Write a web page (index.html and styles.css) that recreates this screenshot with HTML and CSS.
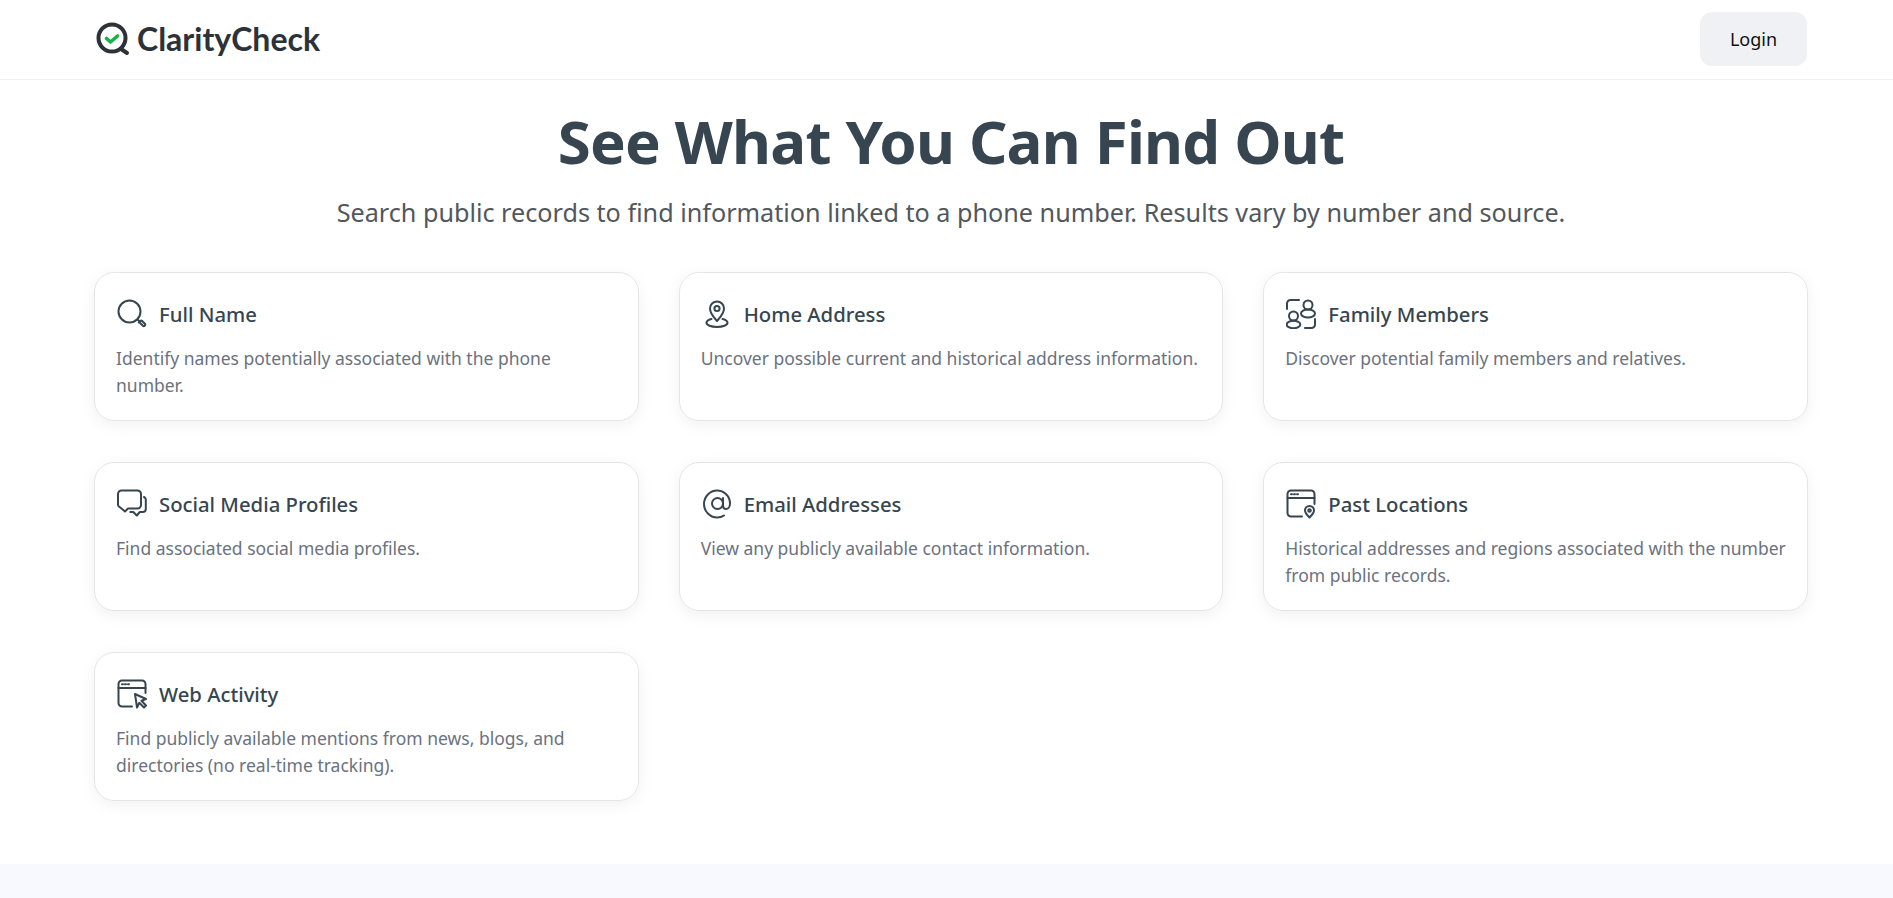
FILE: index.html
```html
<!DOCTYPE html>
<html lang="en">

<head>
  <meta charset="UTF-8">
  <meta name="viewport" content="width=device-width, initial-scale=1.0">
  <title>ClarityCheck</title>
  <link rel="stylesheet" href="styles.css">
</head>

<body>
  <header class="topbar">
    <a href="#" class="logo">
      <svg class="logo-icon" viewBox="0 0 34 34" fill="none" stroke-linecap="round" stroke-linejoin="round">
        <circle cx="16" cy="16" r="13.500" stroke="#2b3238" stroke-width="4" />
        <path d="M25 27l6 4" stroke="#2b3238" stroke-width="4" />
        <path d="M10.500 16.500l4 3.500 7-6" stroke="#12b546" stroke-width="3.600" />
      </svg>
      <span>ClarityCheck</span>
    </a>
    <button class="login">Login</button>
  </header>

  <main>
    <h1>See What You Can Find Out</h1>
    <p class="lead">Search public records to find information linked to a phone number. Results vary by number and source.</p>

    <section class="cards">
      <article class="card">
        <h2>
          <svg viewBox="0 0 30 30" class="icon">
            <circle cx="12.500" cy="12.500" r="11" />
            <path d="M20.500 20.500l1.500 1.500" />
            <path d="M21.800 23.500l1.700-1.700a1 1 0 0 1 1.400 0l3 3a1.200 1.200 0 0 1 0 1.700l-.3.300a1.200 1.200 0 0 1-1.700 0l-3-3a1 1 0 0 1-.1-1.300z" />
          </svg>
          Full Name
        </h2>
        <p>Identify names potentially associated with the phone number.</p>
      </article>

      <article class="card">
        <h2>
          <svg viewBox="0 0 30 30" class="icon">
            <path d="M15 22c-3.500-4-7-7.500-7-12.500a7 7 0 0 1 14 0c0 5-3.500 8.500-7 12.500z" />
            <circle cx="15" cy="9.500" r="2.600" />
            <path d="M9.500 20c-3 .8-5 2-5 3.800 0 2.300 4.500 4.200 10.500 4.200s10.500-1.900 10.500-4.200c0-1.800-2-3-5-3.800" />
          </svg>
          Home Address
        </h2>
        <p>Uncover possible current and historical address information.</p>
      </article>

      <article class="card">
        <h2>
          <svg viewBox="0 0 30 30" class="icon">
            <path d="M1 10V4.500A3.500 3.500 0 0 1 4.500 1H13" />
            <path d="M29 20v5.500a3.500 3.500 0 0 1-3.500 3.500H19" />
            <circle cx="22" cy="6" r="4.500" />
            <ellipse cx="22" cy="14.500" rx="7" ry="4" />
            <circle cx="7.500" cy="17" r="4.500" />
            <ellipse cx="7.500" cy="25.500" rx="6.800" ry="3.800" />
          </svg>
          Family Members
        </h2>
        <p>Discover potential family members and relatives.</p>
      </article>

      <article class="card">
        <h2>
          <svg viewBox="0 0 30 30" class="icon">
            <path d="M4.500 1.500h16a3.500 3.500 0 0 1 3.500 3.500v11a3.500 3.500 0 0 1-3.500 3.500H11l-3 3-5-4.200A3.500 3.500 0 0 1 1 16V5a3.500 3.500 0 0 1 3.500-3.500z" />
            <path d="M27 8c1 .5 1.800 1.500 1.800 2.500V20c0 1.800-1 3-3 3h-3l-3 3.500-3.500-3.500h-3" />
          </svg>
          Social Media Profiles
        </h2>
        <p>Find associated social media profiles.</p>
      </article>

      <article class="card">
        <h2>
          <svg viewBox="0 0 30 30" class="icon">
            <circle cx="15.500" cy="14.500" r="5.500" />
            <path d="M21 9v7.500c0 2 1.200 3.500 3 3.500s4-1.800 4-5.500C28 7 22 1.500 15 1.500S2 7.500 2 15s6 13.500 13 13.500c2.500 0 5-.6 7-2" />
          </svg>
          Email Addresses
        </h2>
        <p>View any publicly available contact information.</p>
      </article>

      <article class="card">
        <h2>
          <svg viewBox="0 0 30 30" class="icon">
            <path d="M16 27.500H5a3.500 3.500 0 0 1-3.500-3.500V5A3.500 3.500 0 0 1 5 1.500h20A3.500 3.500 0 0 1 28.500 5v10" />
            <path d="M1.500 9h27" />
            <path d="M5 5.200h1M8 5.200h1M11 5.200h1" />
            <path d="M23.500 28.500c-2.500-2.500-4.500-4.500-4.500-7a4.500 4.500 0 0 1 9 0c0 2.500-2 4.500-4.500 7z" />
            <circle cx="23.500" cy="21.500" r="1.300" />
          </svg>
          Past Locations
        </h2>
        <p>Historical addresses and regions associated with the number from public records.</p>
      </article>

      <article class="card">
        <h2>
          <svg viewBox="0 0 30 30" class="icon">
            <path d="M15 27.500H5a3.500 3.500 0 0 1-3.500-3.500V5A3.500 3.500 0 0 1 5 1.500h20A3.500 3.500 0 0 1 28.500 5v9" />
            <path d="M1.500 9h27" />
            <path d="M5 5.200h1M8 5.200h1M11 5.200h1" />
            <path d="M18 15l11 5-4.500 1.800L29 26.500l-2 2-4.700-4.700L20 28.500z" />
          </svg>
          Web Activity
        </h2>
        <p>Find publicly available mentions from news, blogs, and directories (no real-time tracking).</p>
      </article>
    </section>
  </main>

  <footer class="band"></footer>
</body>

</html>
```

FILE: styles.css
```css
* {
  box-sizing: border-box;
}

body {
  display: flex;
  flex-direction: column;
  min-block-size: 100vh;
  margin: 0;
  font-family: "Noto Sans", sans-serif;
  background: #fff;
  color: #36454f;
}

.topbar {
  display: flex;
  align-items: center;
  justify-content: space-between;
  block-size: 80px;
  padding-inline: 96px 86px;
  border-block-end: 1px solid #f0f0f2;
}

.logo {
  display: flex;
  align-items: center;
  gap: 7px;
  padding-block-end: 2px;
  text-decoration: none;
  font-family: Lato, sans-serif;
  font-weight: 700;
  font-size: 32px;
  color: #2b3238;
}

.logo-icon {
  inline-size: 34px;
  block-size: 34px;
}

.login {
  inline-size: 107px;
  block-size: 54px;
  margin-block-end: 1px;
  border: 0;
  border-radius: 12px;
  background: #f0f1f5;
  font: inherit;
  font-size: 18px;
  color: #111;
}

main {
  padding-inline: 94px 85px;
}

h1 {
  margin: 25px 0 0;
  font-size: 60px;
  line-height: 72px;
  font-weight: 700;
  letter-spacing: -0.800px;
  text-align: center;
}

.lead {
  margin: 17px 0 0;
  font-size: 25.200px;
  line-height: 36px;
  text-align: center;
  color: #52575c;
}

.cards {
  display: grid;
  grid-template-columns: repeat(3, 1fr);
  gap: 41px 40px;
  margin-block-start: 42px;
}

.card {
  block-size: 149px;
  padding: 26px 21px;
  border: 1px solid #e5e5e5;
  border-radius: 20px;
  box-shadow: 0 4px 16px rgb(0 0 0 / 0.06);
}

.card h2 {
  display: flex;
  align-items: center;
  gap: 12px;
  margin: 0 0 16px;
  font-size: 20.300px;
  line-height: 30px;
  font-weight: 500;
}

.card p {
  margin: 0;
  font-size: 17.500px;
  line-height: 27px;
  color: #6b7280;
}

.icon {
  inline-size: 30px;
  block-size: 30px;
  margin-inline-start: 1px;
  fill: none;
  stroke: #36454f;
  stroke-width: 2;
  stroke-linecap: round;
  stroke-linejoin: round;
}

.band {
  flex: 1;
  margin-block-start: 63px;
  background: #f8f9fe;
}
```
